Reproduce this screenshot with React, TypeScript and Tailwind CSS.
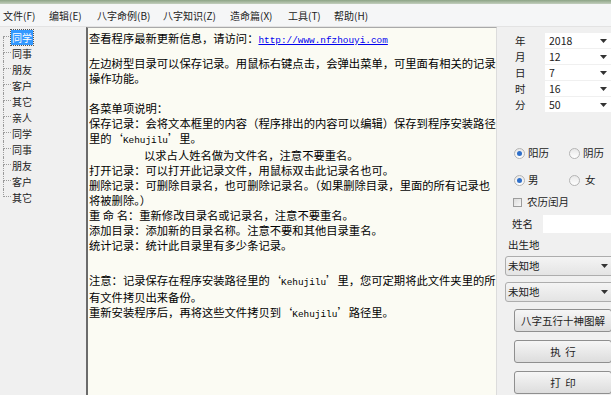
import React from 'react';

const CJK = "font-['SimSun','Noto_Sans_CJK_SC',sans-serif]";

const MENU = [
  { label: '文件(F)', w: 'w-[46px]' },
  { label: '编辑(E)', w: 'w-[48px]' },
  { label: '八字命例(B)', w: 'w-[66px]' },
  { label: '八字知识(Z)', w: 'w-[67px]' },
  { label: '造命篇(X)', w: 'w-[58px]' },
  { label: '工具(T)', w: 'w-[46px]' },
  { label: '帮助(H)', w: 'w-[46px]' },
];

const TREE = ['同学', '同事', '朋友', '客户', '其它', '亲人', '同学', '同事', '朋友', '客户', '其它'];

const DATE_ROWS = [
  { label: '年', value: '2018' },
  { label: '月', value: '12' },
  { label: '日', value: '7' },
  { label: '时', value: '16' },
  { label: '分', value: '50' },
];

function Mono({ children }: { children: React.ReactNode }) {
  return <span className="font-['Liberation_Mono',monospace] text-[9.4px]">{children}</span>;
}

function Arrow() {
  return (
    <svg width="7" height="4" viewBox="0 0 7 4" className="shrink-0">
      <path d="M0 0h7L3.5 4z" fill="#333" />
    </svg>
  );
}

function Radio({ on }: { on: boolean }) {
  return (
    <span className="w-[11px] h-[11px] rounded-full border border-[#b4b4b4] bg-gradient-to-b from-[#e8e8e8] to-white flex items-center justify-center">
      {on && <span className="w-[5px] h-[5px] rounded-full bg-[#2f6fc9]" />}
    </span>
  );
}

function TreeItem({ name, i }: { name: string; i: number }) {
  const first = i === 0;
  const last = i === TREE.length - 1;
  return (
    <div className="flex h-[16px] items-center">
      <div className="w-[8px] h-[16px] flex flex-col shrink-0">
        <div className={`h-[8px] border-b border-dotted border-[#9a9a9a] ${first ? '' : 'border-l'}`} />
        <div className={`h-[8px] border-dotted border-[#9a9a9a] ${last ? '' : 'border-l'}`} />
      </div>
      <span
        className={`px-[1px] leading-[15px] ${
          first ? 'bg-[#3399ff] text-white outline outline-1 outline-dotted outline-[#555]' : 'text-[#222]'
        }`}
      >
        {name}
      </span>
    </div>
  );
}

export default function App() {
  return (
    <div className={`w-[611px] h-[395px] bg-[#f0f0f0] flex flex-col overflow-hidden ${CJK}`}>
      <div className="h-[4px] bg-gradient-to-b from-[#8da486] to-[#c3cfbe]" />

      {/* menu */}
      <div className="h-[23px] flex items-center pl-[3px] text-[10px] text-[#222] bg-[#f5f6f7] border-b border-[#e3e3e3]">
        {MENU.map(m => (
          <span key={m.label} className={`${m.w} shrink-0 whitespace-nowrap`}>{m.label}</span>
        ))}
      </div>

      <div className="flex flex-1 min-h-0">
        {/* tree */}
        <div className="w-[86px] shrink-0 pl-[3px] pt-[2px] text-[10px]">
          {TREE.map((t, i) => (
            <TreeItem key={i} name={t} i={i} />
          ))}
        </div>

        {/* text */}
        <div className="w-[411px] shrink-0 bg-[#fbfbf3] border-l-2 border-t border-l-[#6b6b6b] border-t-[#a9a9a9] border-r border-r-[#dcdcdc] pl-[1px] pt-[3px] text-[11.3px] leading-[15px] text-black whitespace-nowrap overflow-hidden">
          <div>
            查看程序最新更新信息，请访问：
            <span className="text-[#0000ee] underline"><Mono>http://www.nfzhouyi.com</Mono></span>
          </div>
          <div className="mt-[8px]">左边树型目录可以保存记录。用鼠标右键点击，会弹出菜单，可里面有相关的记录</div>
          <div>操作功能。</div>
          <div className="mt-[15px]">各菜单项说明：</div>
          <div>保存记录：会将文本框里的内容（程序排出的内容可以编辑）保存到程序安装路径</div>
          <div>里的‘<Mono>Kehujilu</Mono>’里。</div>
          <div className="pl-[55px]">以求占人姓名做为文件名，注意不要重名。</div>
          <div>打开记录：可以打开此记录文件，用鼠标双击此记录名也可。</div>
          <div>删除记录：可删除目录名，也可删除记录名。（如果删除目录，里面的所有记录也</div>
          <div>将被删除。）</div>
          <div>重 命 名：重新修改目录名或记录名，注意不要重名。</div>
          <div>添加目录：添加新的目录名称。注意不要和其他目录重名。</div>
          <div>统计记录：统计此目录里有多少条记录。</div>
          <div className="mt-[20px]">注意：记录保存在程序安装路径里的‘<Mono>Kehujilu</Mono>’里，您可定期将此文件夹里的所</div>
          <div>有文件拷贝出来备份。</div>
          <div>重新安装程序后，再将这些文件拷贝到‘<Mono>Kehujilu</Mono>’路径里。</div>
        </div>

        {/* right panel */}
        <div className="flex-1 min-w-0 overflow-hidden pt-[6px] text-[10.5px] text-[#222]">
          <div className="flex flex-col gap-[1px] pl-[18px]">
            {DATE_ROWS.map(r => (
              <div key={r.label} className="flex items-center h-[15px]">
                <span className="w-[30px] shrink-0">{r.label}</span>
                <div className="w-[66px] h-[15px] shrink-0 bg-white flex items-center justify-between pl-[4px] pr-[4px]">
                  <span>{r.value}</span>
                  <Arrow />
                </div>
              </div>
            ))}
          </div>

          <div className="mt-[33px] pl-[17px] flex flex-col gap-[11px]">
            <div className="flex items-center h-[16px]">
              <Radio on />
              <span className="ml-[3px] w-[41px]">阳历</span>
              <Radio on={false} />
              <span className="ml-[3px]">阴历</span>
            </div>
            <div className="flex items-center h-[16px]">
              <Radio on />
              <span className="ml-[3px] w-[41px]">男</span>
              <Radio on={false} />
              <span className="ml-[5px]">女</span>
            </div>
          </div>

          <div className="mt-[6px] pl-[16px] flex items-center h-[16px]">
            <span className="w-[9px] h-[9px] border border-[#9c9c9c] bg-gradient-to-br from-[#dcdcdc] to-[#f8f8f8]" />
            <span className="ml-[5px]">农历闰月</span>
          </div>

          <div className="mt-[4px] pl-[15px] flex items-center h-[19px]">
            <span className="w-[31px] shrink-0">姓名</span>
            <div className="w-[70px] h-[18px] shrink-0 bg-white" />
          </div>

          <div className="mt-[4px] pl-[11px] h-[16px] flex items-center">出生地</div>

          <div className="pl-[8px] mt-[3px] flex flex-col gap-[6px]">
            {[0, 1].map(i => (
              <div
                key={i}
                className="w-[110px] h-[20px] shrink-0 rounded-[3px] border border-[#adadad] bg-gradient-to-b from-[#f4f4f4] to-[#e4e4e4] flex items-center justify-between pl-[2px] pr-[6px]"
              >
                <span>未知地</span>
                <Arrow />
              </div>
            ))}
          </div>

          <div className="pl-[17px] mt-[7px] flex flex-col gap-[8px]">
            {['八字五行十神图解', '执  行', '打  印'].map(b => (
              <div
                key={b}
                className="w-[98px] h-[23px] shrink-0 rounded-[3px] border border-[#8f8f8f] bg-gradient-to-b from-[#f6f6f6] to-[#dddddd] flex items-center justify-center whitespace-pre"
              >
                {b}
              </div>
            ))}
          </div>
        </div>
      </div>
    </div>
  );
}
